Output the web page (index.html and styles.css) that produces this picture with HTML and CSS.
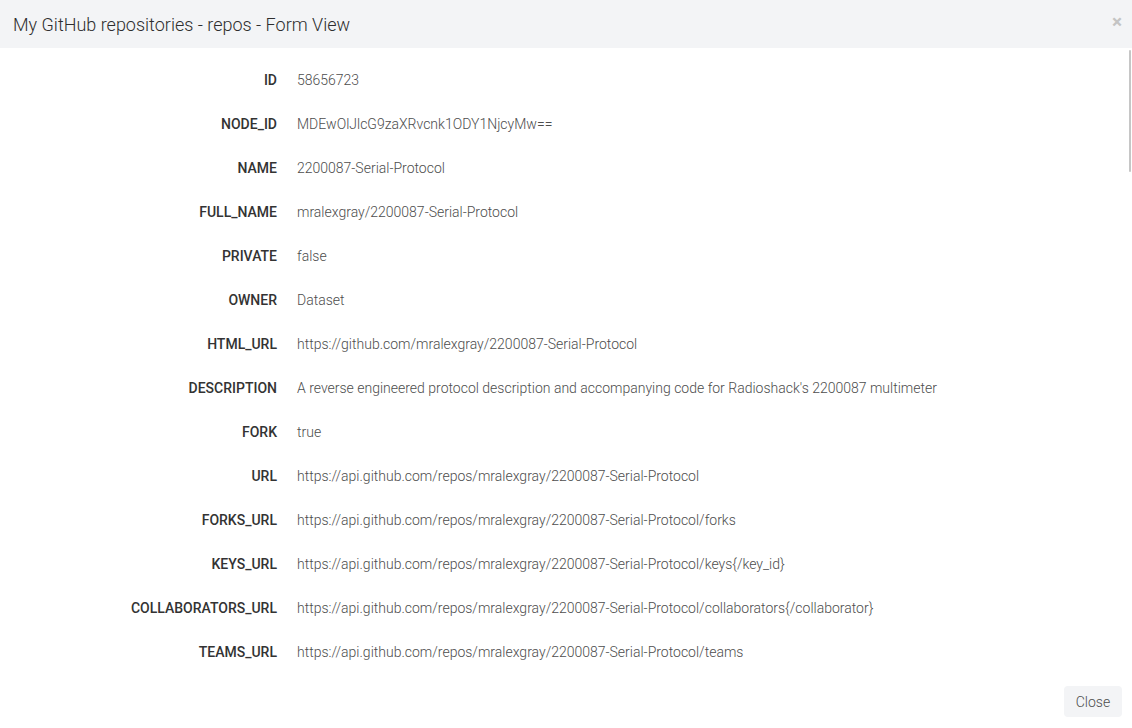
FILE: index.html
```html
<!DOCTYPE html>
<html>
<head>
<meta charset="utf-8">
<link rel="stylesheet" href="styles.css">
</head>
<body>
<div class="modal">
  <div class="modal-header">
    <h4 class="modal-title">My GitHub repositories - repos - Form View</h4>
    <span class="close">&times;</span>
  </div>
  <div class="body-wrap">
    <div class="modal-body">
      <div class="row"><div class="label">ID</div><div class="value">58656723</div></div>
      <div class="row"><div class="label">NODE_ID</div><div class="value">MDEwOlJlcG9zaXRvcnk1ODY1NjcyMw==</div></div>
      <div class="row"><div class="label">NAME</div><div class="value">2200087-Serial-Protocol</div></div>
      <div class="row"><div class="label">FULL_NAME</div><div class="value">mralexgray/2200087-Serial-Protocol</div></div>
      <div class="row"><div class="label">PRIVATE</div><div class="value">false</div></div>
      <div class="row"><div class="label">OWNER</div><div class="value">Dataset</div></div>
      <div class="row"><div class="label">HTML_URL</div><div class="value">https://github.com/mralexgray/2200087-Serial-Protocol</div></div>
      <div class="row"><div class="label">DESCRIPTION</div><div class="value">A reverse engineered protocol description and accompanying code for Radioshack's 2200087 multimeter</div></div>
      <div class="row"><div class="label">FORK</div><div class="value">true</div></div>
      <div class="row"><div class="label">URL</div><div class="value">https://api.github.com/repos/mralexgray/2200087-Serial-Protocol</div></div>
      <div class="row"><div class="label">FORKS_URL</div><div class="value">https://api.github.com/repos/mralexgray/2200087-Serial-Protocol/forks</div></div>
      <div class="row"><div class="label">KEYS_URL</div><div class="value">https://api.github.com/repos/mralexgray/2200087-Serial-Protocol/keys{/key_id}</div></div>
      <div class="row"><div class="label">COLLABORATORS_URL</div><div class="value">https://api.github.com/repos/mralexgray/2200087-Serial-Protocol/collaborators{/collaborator}</div></div>
      <div class="row"><div class="label">TEAMS_URL</div><div class="value">https://api.github.com/repos/mralexgray/2200087-Serial-Protocol/teams</div></div>
      <div class="row"><div class="label">HOOKS_URL</div><div class="value">https://api.github.com/repos/mralexgray/2200087-Serial-Protocol/hooks</div></div>
      <div class="row"><div class="label">ISSUE_EVENTS_URL</div><div class="value">https://api.github.com/repos/mralexgray/2200087-Serial-Protocol/issues/events{/number}</div></div>
      <div class="row"><div class="label">EVENTS_URL</div><div class="value">https://api.github.com/repos/mralexgray/2200087-Serial-Protocol/events</div></div>
      <div class="row"><div class="label">ASSIGNEES_URL</div><div class="value">https://api.github.com/repos/mralexgray/2200087-Serial-Protocol/assignees{/user}</div></div>
      <div class="row"><div class="label">BRANCHES_URL</div><div class="value">https://api.github.com/repos/mralexgray/2200087-Serial-Protocol/branches{/branch}</div></div>
      <div class="row"><div class="label">TAGS_URL</div><div class="value">https://api.github.com/repos/mralexgray/2200087-Serial-Protocol/tags</div></div>
      <div class="row"><div class="label">BLOBS_URL</div><div class="value">https://api.github.com/repos/mralexgray/2200087-Serial-Protocol/git/blobs{/sha}</div></div>
      <div class="row"><div class="label">GIT_TAGS_URL</div><div class="value">https://api.github.com/repos/mralexgray/2200087-Serial-Protocol/git/tags{/sha}</div></div>
      <div class="row"><div class="label">GIT_REFS_URL</div><div class="value">https://api.github.com/repos/mralexgray/2200087-Serial-Protocol/git/refs{/sha}</div></div>
      <div class="row"><div class="label">TREES_URL</div><div class="value">https://api.github.com/repos/mralexgray/2200087-Serial-Protocol/git/trees{/sha}</div></div>
      <div class="row"><div class="label">STATUSES_URL</div><div class="value">https://api.github.com/repos/mralexgray/2200087-Serial-Protocol/statuses/{sha}</div></div>
      <div class="row"><div class="label">LANGUAGES_URL</div><div class="value">https://api.github.com/repos/mralexgray/2200087-Serial-Protocol/languages</div></div>
      <div class="row"><div class="label">STARGAZERS_URL</div><div class="value">https://api.github.com/repos/mralexgray/2200087-Serial-Protocol/stargazers</div></div>
      <div class="row"><div class="label">CONTRIBUTORS_URL</div><div class="value">https://api.github.com/repos/mralexgray/2200087-Serial-Protocol/contributors</div></div>
      <div class="row"><div class="label">SUBSCRIBERS_URL</div><div class="value">https://api.github.com/repos/mralexgray/2200087-Serial-Protocol/subscribers</div></div>
      <div class="row"><div class="label">SUBSCRIPTION_URL</div><div class="value">https://api.github.com/repos/mralexgray/2200087-Serial-Protocol/subscription</div></div>
      <div class="row"><div class="label">COMMITS_URL</div><div class="value">https://api.github.com/repos/mralexgray/2200087-Serial-Protocol/commits{/sha}</div></div>
      <div class="row"><div class="label">GIT_COMMITS_URL</div><div class="value">https://api.github.com/repos/mralexgray/2200087-Serial-Protocol/git/commits{/sha}</div></div>
      <div class="row"><div class="label">COMMENTS_URL</div><div class="value">https://api.github.com/repos/mralexgray/2200087-Serial-Protocol/comments{/number}</div></div>
      <div class="row"><div class="label">ISSUE_COMMENT_URL</div><div class="value">https://api.github.com/repos/mralexgray/2200087-Serial-Protocol/issues/comments{/number}</div></div>
      <div class="row"><div class="label">CONTENTS_URL</div><div class="value">https://api.github.com/repos/mralexgray/2200087-Serial-Protocol/contents/{+path}</div></div>
      <div class="row"><div class="label">COMPARE_URL</div><div class="value">https://api.github.com/repos/mralexgray/2200087-Serial-Protocol/compare/{base}...{head}</div></div>
      <div class="row"><div class="label">MERGES_URL</div><div class="value">https://api.github.com/repos/mralexgray/2200087-Serial-Protocol/merges</div></div>
      <div class="row"><div class="label">ARCHIVE_URL</div><div class="value">https://api.github.com/repos/mralexgray/2200087-Serial-Protocol/{archive_format}{/ref}</div></div>
      <div class="row"><div class="label">DOWNLOADS_URL</div><div class="value">https://api.github.com/repos/mralexgray/2200087-Serial-Protocol/downloads</div></div>
      <div class="row"><div class="label">ISSUES_URL</div><div class="value">https://api.github.com/repos/mralexgray/2200087-Serial-Protocol/issues{/number}</div></div>
      <div class="row"><div class="label">PULLS_URL</div><div class="value">https://api.github.com/repos/mralexgray/2200087-Serial-Protocol/pulls{/number}</div></div>
      <div class="row"><div class="label">MILESTONES_URL</div><div class="value">https://api.github.com/repos/mralexgray/2200087-Serial-Protocol/milestones{/number}</div></div>
      <div class="row"><div class="label">NOTIFICATIONS_URL</div><div class="value">https://api.github.com/repos/mralexgray/2200087-Serial-Protocol/notifications{?since,all,participating}</div></div>
      <div class="row"><div class="label">LABELS_URL</div><div class="value">https://api.github.com/repos/mralexgray/2200087-Serial-Protocol/labels{/name}</div></div>
      <div class="row"><div class="label">RELEASES_URL</div><div class="value">https://api.github.com/repos/mralexgray/2200087-Serial-Protocol/releases{/id}</div></div>
      <div class="row"><div class="label">DEPLOYMENTS_URL</div><div class="value">https://api.github.com/repos/mralexgray/2200087-Serial-Protocol/deployments</div></div>
      <div class="row"><div class="label">CREATED_AT</div><div class="value">2016-05-12T13:19:04Z</div></div>
      <div class="row"><div class="label">UPDATED_AT</div><div class="value">2016-05-12T13:19:06Z</div></div>
      <div class="row"><div class="label">PUSHED_AT</div><div class="value">2014-11-12T01:28:24Z</div></div>
      <div class="row"><div class="label">GIT_URL</div><div class="value">git://github.com/mralexgray/2200087-Serial-Protocol.git</div></div>
      <div class="row"><div class="label">SSH_URL</div><div class="value">git@github.com:mralexgray/2200087-Serial-Protocol.git</div></div>
      <div class="row"><div class="label">CLONE_URL</div><div class="value">https://github.com/mralexgray/2200087-Serial-Protocol.git</div></div>
      <div class="row"><div class="label">SVN_URL</div><div class="value">https://github.com/mralexgray/2200087-Serial-Protocol</div></div>
      <div class="row"><div class="label">SIZE</div><div class="value">41</div></div>
      <div class="row"><div class="label">STARGAZERS_COUNT</div><div class="value">0</div></div>
      <div class="row"><div class="label">WATCHERS_COUNT</div><div class="value">0</div></div>
      <div class="row"><div class="label">LANGUAGE</div><div class="value">Python</div></div>
      <div class="row"><div class="label">HAS_ISSUES</div><div class="value">false</div></div>
      <div class="row"><div class="label">HAS_PROJECTS</div><div class="value">true</div></div>
      <div class="row"><div class="label">HAS_DOWNLOADS</div><div class="value">true</div></div>
      <div class="row"><div class="label">HAS_WIKI</div><div class="value">true</div></div>
      <div class="row"><div class="label">HAS_PAGES</div><div class="value">false</div></div>
      <div class="row"><div class="label">FORKS_COUNT</div><div class="value">1</div></div>
      <div class="row"><div class="label">ARCHIVED</div><div class="value">false</div></div>
      <div class="row"><div class="label">DISABLED</div><div class="value">false</div></div>
      <div class="row"><div class="label">OPEN_ISSUES_COUNT</div><div class="value">0</div></div>
      <div class="row"><div class="label">FORKS</div><div class="value">1</div></div>
      <div class="row"><div class="label">OPEN_ISSUES</div><div class="value">0</div></div>
      <div class="row"><div class="label">WATCHERS</div><div class="value">0</div></div>
      <div class="row"><div class="label">DEFAULT_BRANCH</div><div class="value">master</div></div>
    </div>
    <div class="scroll-thumb"></div>
  </div>
  <div class="modal-footer">
    <button class="btn-close">Close</button>
  </div>
</div>
</body>
</html>
```
FILE: styles.css
```css
html, body {
  margin: 0;
  padding: 0;
  height: 100%;
  background: #ffffff;
  font-family: Roboto, "Liberation Sans", sans-serif;
}

.modal {
  height: 100vh;
  display: flex;
  flex-direction: column;
}

.modal-header {
  position: relative;
  height: 48px;
  flex: none;
  background: #f3f4f6;
  display: flex;
  align-items: center;
  padding: 1px 13px 0;
  box-sizing: border-box;
}

.modal-title {
  margin: 0;
  font-size: 18px;
  font-weight: 300;
  color: #2e2e2e;
  line-height: 24px;
}

.close {
  position: absolute;
  right: 10px;
  top: 12px;
  font-size: 19px;
  font-weight: 700;
  line-height: 20px;
  color: #c4c4c4;
}

.body-wrap {
  position: relative;
  flex: 1;
  min-height: 0;
  display: flex;
}

.modal-body {
  flex: 1;
  overflow-y: auto;
  padding-top: 22px;
  scrollbar-width: none;
}

.modal-body::-webkit-scrollbar {
  display: none;
}

.scroll-thumb {
  position: absolute;
  right: 1px;
  top: 2px;
  width: 2.5px;
  height: 122px;
  background: #c6c6c6;
  border-radius: 2px;
}

.row {
  display: flex;
  gap: 20px;
  margin-bottom: 24px;
  font-size: 14px;
  line-height: 20px;
}

.label {
  flex: none;
  width: 277px;
  text-align: right;
  font-weight: 500;
  color: #333333;
}

.value {
  flex: 1;
  font-weight: 300;
  color: #4d4d4d;
  min-height: 20px;
}

.modal-footer {
  flex: none;
  display: flex;
  justify-content: flex-end;
  padding: 9px 10px 11px 0;
}

.btn-close {
  font-family: Roboto, "Liberation Sans", sans-serif;
  font-size: 14px;
  font-weight: 300;
  color: #4d4d4d;
  background: #f3f4f6;
  border: none;
  border-radius: 4px;
  height: 31px;
  width: 58px;
  padding: 0;
}
```
